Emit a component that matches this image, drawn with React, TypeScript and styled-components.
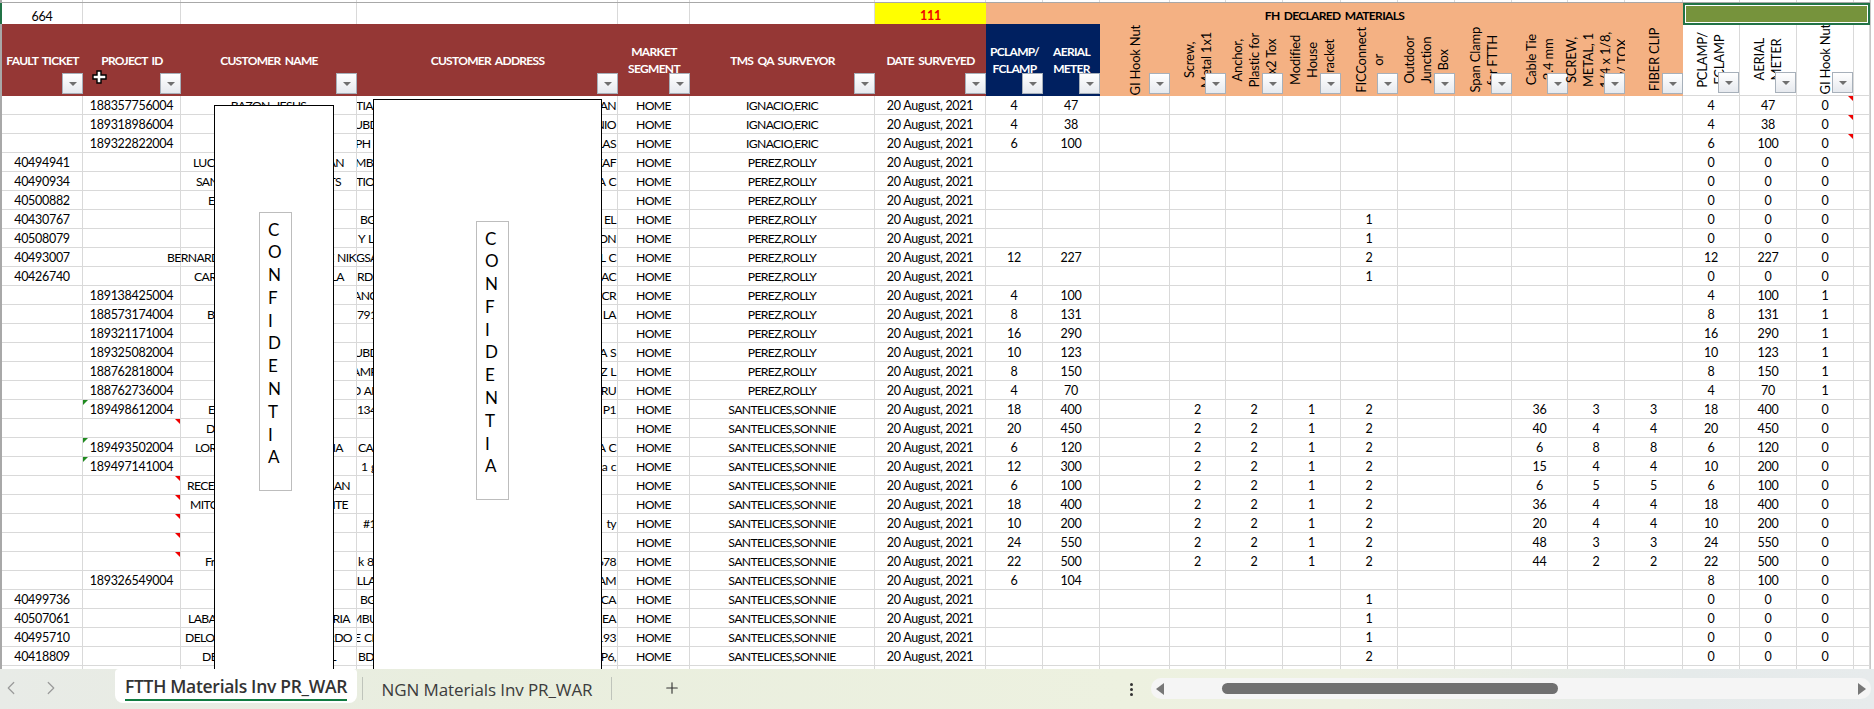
import React from "react";
import styled, { createGlobalStyle } from "styled-components";
import { ChevronLeft, ChevronRight, Plus } from "lucide-react";

const widths = [81, 98, 176, 261, 72, 185, 111, 57, 57, 70, 56, 57, 58, 57, 57, 57, 56, 57, 58, 57, 57, 57, 16];
const columns = widths.map((w) => `${w}px`).join(" ");
const lineColor = "#d9d9d9";

const Global = createGlobalStyle`
  html, body { margin: 0; padding: 0; background: #fff; }
  body { font-family: Lato, "Liberation Sans", sans-serif; }
`;

const Page = styled.div`
  width: 1874px;
  height: 709px;
  display: flex;
  flex-direction: column;
  overflow: hidden;
  background: #fff;
`;
const Sheet = styled.div`
  position: relative;
  height: 669px;
  overflow: hidden;
  flex: none;
`;
const GridArea = styled.div`
  width: 1868px;
  border-left: 2px solid #a8a8a8;
  border-right: 1px solid #c8c8c8;
  height: 669px;
  font-size: 12.5px;
  letter-spacing: -0.3px;
  color: #000;
`;
const TopStrip = styled.div`
  display: grid;
  grid-template-columns: ${columns};
  height: 3px;
  margin-left: -2px;
  padding-left: 2px;
  border-bottom: 1px solid #a8a8a8;
  box-sizing: border-box;
`;
const StripCell = styled.div`
  border-right: 1px solid ${lineColor};
`;
const SumRow = styled.div`
  display: grid;
  grid-template-columns: ${columns};
  height: 21px;
  position: relative;
`;
const SumCell = styled.div`
  border-right: 1px solid ${lineColor};
  text-align: center;
  line-height: 27px;
`;
const SelectionTick = styled.span`
  position: absolute;
  left: -2px;
  top: 0;
  width: 2px;
  height: 21px;
  background: #217346;
`;
const TargetCell = styled.div`
  background: #ffff00;
  color: #f00000;
  font-weight: 700;
  text-align: center;
  line-height: 25px;
`;
const BandCell = styled.div`
  grid-column: span 12;
  background: #f4b183;
  color: #000;
  font-weight: 700;
  font-size: 12px;
  letter-spacing: -0.66px;
  word-spacing: 2px;
  text-align: center;
  line-height: 25px;
`;
const GreenCell = styled.div`
  grid-column: span 4;
  background: #76933c;
  border: 2px solid #217346;
  outline: 1px solid #fff;
  outline-offset: -3px;
  box-sizing: border-box;
  height: 22px;
  position: relative;
  z-index: 1;
`;
const HeaderRow = styled.div`
  display: grid;
  grid-template-columns: ${columns};
  height: 72px;
`;
const toneBg: Record<string, string> = { maroon: "#953735", navy: "#002060", orange: "#f4b183", white: "#ffffff" };
const HeaderCell = styled.div<{ $tone: string }>`
  position: relative;
  background: ${(p) => toneBg[p.$tone]};
  color: ${(p) => (p.$tone === "maroon" || p.$tone === "navy" ? "#fff" : "#000")};
  display: flex;
  align-items: center;
  justify-content: center;
  text-align: center;
  line-height: 17px;
  border-right: ${(p) => (p.$tone === "white" ? `1px solid ${lineColor}` : "none")};
  border-bottom: ${(p) => (p.$tone === "white" ? `1px solid ${lineColor}` : "none")};
  box-sizing: border-box;
`;
const HeadLabel = styled.span`
  font-weight: 700;
  font-size: 12px;
  letter-spacing: -0.7px;
  word-spacing: 2px;
  white-space: nowrap;
  flex: none;
`;
const RotatedLabel = styled.span`
  writing-mode: vertical-rl;
  transform: rotate(180deg);
  white-space: nowrap;
  flex: none;
  text-align: center;
  font-size: 13px;
  line-height: 17px;
  letter-spacing: -0.2px;
`;
const FilterButton = styled.span`
  position: absolute;
  right: 0;
  bottom: 2px;
  width: 21px;
  height: 21px;
  box-sizing: border-box;
  border: 1px solid #a7b0ba;
  background: linear-gradient(#ffffff, #e6e9ee);
  display: flex;
  align-items: center;
  justify-content: center;
  &::after {
    content: "";
    border-left: 4px solid transparent;
    border-right: 4px solid transparent;
    border-top: 4px solid #6f6f6f;
  }
`;
const DataRow = styled.div`
  display: grid;
  grid-template-columns: ${columns};
  height: 19px;
`;
const Cell = styled.div`
  position: relative;
  border-right: 1px solid ${lineColor};
  border-bottom: 1px solid ${lineColor};
  box-sizing: border-box;
  height: 19px;
  line-height: 19px;
  text-align: center;
  white-space: nowrap;
`;
const CapsCell = styled(Cell)`
  font-size: 12.2px;
  letter-spacing: -0.62px;
  word-spacing: 1px;
`;
const SplitCell = styled(CapsCell)`
  display: flex;
  justify-content: space-between;
`;
const ClipCell = styled(SplitCell)`
  overflow: hidden;
`;
const LeftPiece = styled.span<{ $x: number }>`
  margin-left: ${(p) => p.$x}px;
  flex: none;
`;
const RightPiece = styled.span<{ $x: number }>`
  margin-right: ${(p) => p.$x}px;
  flex: none;
`;
const CentredPiece = styled.span`
  flex: 1;
  text-align: center;
`;
const Corner = styled.i<{ $green?: boolean }>`
  position: absolute;
  top: 0;
  width: 0;
  height: 0;
  ${(p) =>
    p.$green
      ? `left: 0; border-top: 5px solid #1f8a1f; border-right: 5px solid transparent;`
      : `right: 0; border-top: 5px solid #f00000; border-left: 5px solid transparent;`}
`;
const Redaction = styled.div<{ $x: number; $y: number; $w: number }>`
  position: absolute;
  left: ${(p) => p.$x}px;
  top: ${(p) => p.$y}px;
  width: ${(p) => p.$w}px;
  height: 620px;
  box-sizing: border-box;
  background: #fff;
  border: 1.5px solid #000;
`;
const Stamp = styled.div<{ $x: number; $y: number }>`
  position: absolute;
  left: ${(p) => p.$x}px;
  top: ${(p) => p.$y}px;
  width: 33px;
  height: 279px;
  box-sizing: border-box;
  border: 1px solid #bdbdbd;
  padding: 5.5px 0 0 8px;
  font-size: 17px;
  line-height: 22.8px;
  color: #000;
`;
const StampLetter = styled.div``;
const CursorMark = styled.svg`
  position: absolute;
  left: 92px;
  top: 70px;
`;

const TabBar = styled.div`
  height: 40px;
  flex: none;
  display: flex;
  align-items: flex-start;
  background: linear-gradient(90deg, #e8ebe7 0%, #e9eede 25%, #edf1e0 60%, #eef1e2 72%, #e5eaea 90%, #e7ebec 100%);
  font-family: "Open Sans", "Noto Sans", sans-serif;
  color: #333;
  & > * {
    flex: none;
  }
`;
const NavGroup = styled.div`
  width: 115px;
  height: 38px;
  display: flex;
  align-items: center;
  gap: 18px;
  color: #9a9a9a;
`;
const ActiveTab = styled.div`
  width: 242px;
  height: 34px;
  background: #fff;
  border-radius: 4px 4px 8px 8px;
  box-sizing: border-box;
  padding: 0 10px;
  display: flex;
  flex-direction: column;
  align-items: stretch;
  font-size: 17.5px;
  font-weight: 600;
  letter-spacing: -0.3px;
  line-height: 34px;
  white-space: nowrap;
  &::after {
    content: "";
    height: 2px;
    background: #107c41;
  }
`;
const TabText = styled.span`
  height: 30px;
  text-align: center;
`;
const IdleTab = styled.div`
  width: 250px;
  height: 23px;
  margin: 8px 0 0 5px;
  border-left: 1px solid #bfc4bb;
  border-right: 1px solid #bfc4bb;
  box-sizing: border-box;
  font-size: 17px;
  letter-spacing: -0.1px;
  line-height: 26px;
  text-align: center;
  white-space: nowrap;
  color: #3c3c3c;
`;
const AddSheet = styled.div`
  width: 120px;
  height: 38px;
  display: flex;
  align-items: center;
  justify-content: center;
  color: #333;
`;
const Spacer = styled.div`
  width: 379px;
`;
const Dots = styled.div`
  width: 40px;
  height: 40px;
  display: flex;
  flex-direction: column;
  align-items: center;
  justify-content: center;
  gap: 2px;
  & > i {
    width: 3px;
    height: 3px;
    background: #333;
    border-radius: 50%;
  }
`;
const ScrollTrack = styled.div`
  width: 720px;
  height: 21px;
  margin-top: 9px;
  background: #f5f5f5;
  border-radius: 10px;
  display: flex;
  align-items: center;
  box-sizing: border-box;
  padding: 0 5px;
`;
const Arrow = styled.i<{ $right?: boolean }>`
  width: 0;
  height: 0;
  flex: none;
  border-top: 6px solid transparent;
  border-bottom: 6px solid transparent;
  ${(p) => (p.$right ? "border-left: 8px solid #777; margin-left: 300px;" : "border-right: 8px solid #777; margin-right: 58px;")}
`;
const Thumb = styled.div`
  width: 336px;
  height: 11px;
  flex: none;
  border-radius: 6px;
  background: #707070;
`;

type Row = {
  ft?: string;
  pid?: string;
  mark?: "green" | "red";
  full?: string;
  nl?: [string, number];
  nr?: [string, number];
  al?: [string, number];
  ar?: string;
  s?: number;
  pc?: number;
  am?: number;
  fic?: number;
  kit?: [number, number, number];
  t?: [number, number, number];
  flag?: boolean;
};

const surveyors = ["IGNACIO,ERIC", "PEREZ,ROLLY", "SANTELICES,SONNIE"];

const rows: Row[] = [
  { pid: "188357756004", full: "BAZON, JESUS", al: ["TIA", -1], ar: "AN", s: 0, pc: 4, am: 47, t: [4, 47, 0], flag: true },
  { pid: "189318986004", al: ["UBD", -3], ar: "NIO", s: 0, pc: 4, am: 38, t: [4, 38, 0], flag: true },
  { pid: "189322822004", al: ["PH 2", -2], ar: "LAS", s: 0, pc: 6, am: 100, t: [6, 100, 0], flag: true },
  { ft: "40494941", nl: ["LUC", 12], nr: ["AN", 12], al: ["MB", -2], ar: "EAF", s: 1, t: [0, 0, 0] },
  { ft: "40490934", nl: ["SAN", 15], nr: ["TS", 15], al: ["TIO", -1], ar: "A C", s: 1, t: [0, 0, 0] },
  { ft: "40500882", nl: ["E", 27], s: 1, t: [0, 0, 0] },
  { ft: "40430767", al: ["BG", 3], ar: "L EL", s: 1, fic: 1, t: [0, 0, 0] },
  { ft: "40508079", al: ["Y L", 1], ar: "ON", s: 1, fic: 1, t: [0, 0, 0] },
  { ft: "40493007", nl: ["BERNARD", -14], nr: ["E NIK", 0], al: ["GSA", -1], ar: "LL C", s: 1, pc: 12, am: 227, fic: 2, t: [12, 227, 0] },
  { ft: "40426740", nl: ["CAR", 13], nr: ["LA", 12], al: ["RD", 0], ar: "LAC", s: 1, fic: 1, t: [0, 0, 0] },
  { pid: "189138425004", al: ["ANC", -4], ar: "CR", s: 1, pc: 4, am: 100, t: [4, 100, 1] },
  { pid: "188573174004", nl: ["B", 26], al: ["791", 0], ar: "Z LA", s: 1, pc: 8, am: 131, t: [8, 131, 1] },
  { pid: "189321171004", s: 1, pc: 16, am: 290, t: [16, 290, 1] },
  { pid: "189325082004", al: ["UBD", -3], ar: "LA S", s: 1, pc: 10, am: 123, t: [10, 123, 1] },
  { pid: "188762818004", al: ["AMP", -5], ar: "Z L", s: 1, pc: 8, am: 150, t: [8, 150, 1] },
  { pid: "188762736004", al: ["D AN", -5], ar: "CRU", s: 1, pc: 4, am: 70, t: [4, 70, 1] },
  { pid: "189498612004", mark: "green", nl: ["E", 27], al: ["134", 0], ar: "P1", s: 2, pc: 18, am: 400, fic: 2, kit: [36, 3, 3], t: [18, 400, 0] },
  { mark: "red", nl: ["D", 25], s: 2, pc: 20, am: 450, fic: 2, kit: [40, 4, 4], t: [20, 450, 0] },
  { pid: "189493502004", mark: "green", nl: ["LOR", 14], nr: ["IA", 13], al: ["CA", 1], ar: "A C", s: 2, pc: 6, am: 120, fic: 2, kit: [6, 8, 8], t: [6, 120, 0] },
  { pid: "189497141004", mark: "green", al: ["1 g", 4], ar: "a c", s: 2, pc: 12, am: 300, fic: 2, kit: [15, 4, 4], t: [10, 200, 0] },
  { mark: "red", nl: ["RECE", 6], nr: ["AN", 6], s: 2, pc: 6, am: 100, fic: 2, kit: [6, 5, 5], t: [6, 100, 0] },
  { mark: "red", nl: ["MITC", 9], nr: ["ITE", 8], s: 2, pc: 18, am: 400, fic: 2, kit: [36, 4, 4], t: [18, 400, 0] },
  { mark: "red", al: ["#1", 6], ar: "ty", s: 2, pc: 10, am: 200, fic: 2, kit: [20, 4, 4], t: [10, 200, 0] },
  { mark: "red", s: 2, pc: 24, am: 550, fic: 2, kit: [48, 3, 3], t: [24, 550, 0] },
  { mark: "red", nl: ["Fr", 24], al: ["k 8", 1], ar: "678", s: 2, pc: 22, am: 500, fic: 2, kit: [44, 2, 2], t: [22, 500, 0] },
  { pid: "189326549004", al: ["ILLA", -3], ar: "LAM", s: 2, pc: 6, am: 104, t: [8, 100, 0] },
  { ft: "40499736", al: ["BG", 3], ar: "CA", s: 2, fic: 1, t: [0, 0, 0] },
  { ft: "40507061", nl: ["LABA", 7], nr: ["RIA", 6], al: ["MBU", -6], ar: "EA", s: 2, fic: 1, t: [0, 0, 0] },
  { ft: "40495710", nl: ["DELOR", 4], nr: ["RDO", 4], al: ["E CI", -3], ar: "193", s: 2, fic: 1, t: [0, 0, 0] },
  { ft: "40418809", nl: ["DE", 21], nr: ["L", 20], al: ["BD", 1], ar: "P6,", s: 2, fic: 2, t: [0, 0, 0] },
  {},
];

type Head = { lines: string[]; tone: string; rotated?: boolean; noFilter?: boolean };
const maroon = (...lines: string[]): Head => ({ lines, tone: "maroon" });
const navy = (...lines: string[]): Head => ({ lines, tone: "navy" });
const orange = (...lines: string[]): Head => ({ lines, tone: "orange", rotated: true });
const white = (...lines: string[]): Head => ({ lines, tone: "white", rotated: true });

const heads: Head[] = [
  maroon("FAULT TICKET"),
  maroon("PROJECT ID"),
  maroon("CUSTOMER NAME"),
  maroon("CUSTOMER ADDRESS"),
  maroon("MARKET", "SEGMENT"),
  maroon("TMS QA SURVEYOR"),
  maroon("DATE SURVEYED"),
  navy("PCLAMP/", "FCLAMP"),
  navy("AERIAL", "METER"),
  orange("GI Hook Nut"),
  orange("Screw,", "Metal 1x1"),
  orange("Anchor,", "Plastic for", "1x2 Tox"),
  orange("Modified", "House", "Bracket"),
  orange("FICConnect", "or"),
  orange("Outdoor", "Junction", "Box"),
  orange("Span Clamp", "for FTTH"),
  orange("Cable Tie", "2.4 mm"),
  orange("SCREW,", "METAL, 1", "1/4 x 1/8,", "w/ TOX"),
  orange("FIBER CLIP"),
  white("PCLAMP/", "FCLAMP"),
  white("AERIAL", "METER"),
  white("GI Hook Nut"),
  { lines: [], tone: "white", noFilter: true },
];

const stampLetters = "CONFIDENTIA".split("");

function Stack({ lines }: { lines: string[] }) {
  return (
    <>
      {lines.map((l, i) => (
        <React.Fragment key={i}>
          {i > 0 && <br />}
          {l}
        </React.Fragment>
      ))}
    </>
  );
}

function SheetRow({ r }: { r: Row }) {
  const on = r.kit !== undefined;
  const blank = r.s === undefined;
  return (
    <DataRow>
      <Cell>{r.ft}</Cell>
      <Cell>
        {r.pid}
        {r.mark === "green" && <Corner $green />}
        {r.mark === "red" && <Corner />}
      </Cell>
      <SplitCell>
        {r.full ? (
          <CentredPiece>{r.full}</CentredPiece>
        ) : (
          <>
            {r.nl ? <LeftPiece $x={r.nl[1]}>{r.nl[0]}</LeftPiece> : <span />}
            {r.nr ? <RightPiece $x={r.nr[1]}>{r.nr[0]}</RightPiece> : <span />}
          </>
        )}
      </SplitCell>
      <ClipCell>
        {r.al ? <LeftPiece $x={r.al[1]}>{r.al[0]}</LeftPiece> : <span />}
        {r.ar ? <RightPiece $x={1}>{r.ar}</RightPiece> : <span />}
      </ClipCell>
      <CapsCell>{blank ? "" : "HOME"}</CapsCell>
      <CapsCell>{blank ? "" : surveyors[r.s as number]}</CapsCell>
      <Cell>{blank ? "" : "20 August, 2021"}</Cell>
      <Cell>{r.pc}</Cell>
      <Cell>{r.am}</Cell>
      <Cell />
      <Cell>{on ? 2 : ""}</Cell>
      <Cell>{on ? 2 : ""}</Cell>
      <Cell>{on ? 1 : ""}</Cell>
      <Cell>{r.fic}</Cell>
      <Cell />
      <Cell />
      <Cell>{r.kit?.[0]}</Cell>
      <Cell>{r.kit?.[1]}</Cell>
      <Cell>{r.kit?.[2]}</Cell>
      <Cell>{r.t?.[0]}</Cell>
      <Cell>{r.t?.[1]}</Cell>
      <Cell>
        {r.t?.[2]}
        {r.flag && <Corner />}
      </Cell>
      <Cell />
    </DataRow>
  );
}

export default function App() {
  return (
    <Page>
      <Global />
      <Sheet>
        <GridArea>
          <TopStrip>
            {widths.map((_, i) => (
              <StripCell key={i} />
            ))}
          </TopStrip>
          <SumRow>
            <SelectionTick />
            <SumCell>664</SumCell>
            <SumCell />
            <SumCell />
            <SumCell />
            <SumCell />
            <SumCell />
            <TargetCell>111</TargetCell>
            <BandCell>FH DECLARED MATERIALS</BandCell>
            <GreenCell />
          </SumRow>
          <HeaderRow>
            {heads.map((h, i) => (
              <HeaderCell key={i} $tone={h.tone}>
                {h.rotated ? (
                  <RotatedLabel>
                    <Stack lines={h.lines} />
                  </RotatedLabel>
                ) : (
                  <HeadLabel>
                    <Stack lines={h.lines} />
                  </HeadLabel>
                )}
                {!h.noFilter && <FilterButton />}
              </HeaderCell>
            ))}
          </HeaderRow>
          {rows.map((r, i) => (
            <SheetRow key={i} r={r} />
          ))}
        </GridArea>
        <Redaction $x={214} $y={105} $w={120}>
          <Stamp $x={44} $y={106}>
            {stampLetters.map((l, i) => (
              <StampLetter key={i}>{l}</StampLetter>
            ))}
          </Stamp>
        </Redaction>
        <Redaction $x={373} $y={99} $w={229}>
          <Stamp $x={102} $y={121}>
            {stampLetters.map((l, i) => (
              <StampLetter key={i}>{l}</StampLetter>
            ))}
          </Stamp>
        </Redaction>
        <CursorMark width="15" height="14" viewBox="0 0 15 14">
          <path d="M5 1h4v4h5v4H9v4H5V9H1V5h4z" fill="#fff" stroke="#000" strokeWidth="1.4" />
        </CursorMark>
      </Sheet>
      <TabBar>
        <NavGroup>
          <ChevronLeft size={22} strokeWidth={1.3} />
          <ChevronRight size={22} strokeWidth={1.3} />
        </NavGroup>
        <ActiveTab>
          <TabText>FTTH Materials Inv PR_WAR</TabText>
        </ActiveTab>
        <IdleTab>NGN Materials Inv PR_WAR</IdleTab>
        <AddSheet>
          <Plus size={18} strokeWidth={1.5} />
        </AddSheet>
        <Spacer />
        <Dots>
          <i />
          <i />
          <i />
        </Dots>
        <ScrollTrack>
          <Arrow />
          <Thumb />
          <Arrow $right />
        </ScrollTrack>
      </TabBar>
    </Page>
  );
}
